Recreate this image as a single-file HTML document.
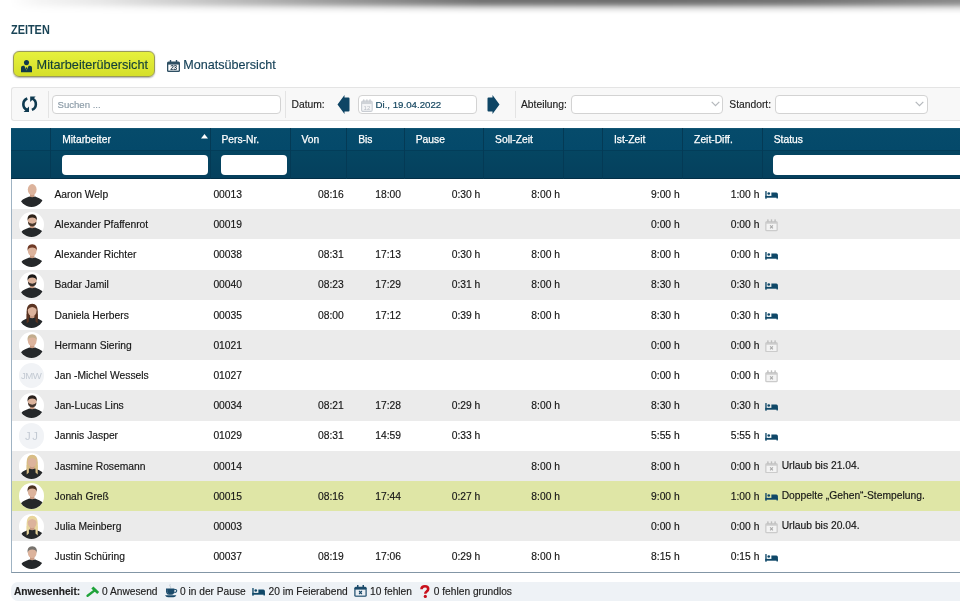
<!DOCTYPE html>
<html><head><meta charset="utf-8">
<style>
*{box-sizing:border-box;margin:0;padding:0}
html,body{width:960px;height:607px;overflow:hidden;background:#fff;font-family:"Liberation Sans",sans-serif;color:#222}
body div{-webkit-text-stroke:.15px}
#wrap{position:absolute;left:0;top:0;width:960px;height:607px;will-change:transform}
.abs{position:absolute}
#shadow{position:absolute;left:0;top:0;width:960px;height:15px;background:linear-gradient(rgba(0,0,0,.575) 0px,rgba(0,0,0,.553) 1.5px,rgba(0,0,0,.522) 2.5px,rgba(0,0,0,.478) 3.5px,rgba(0,0,0,.424) 4.5px,rgba(0,0,0,.353) 5.5px,rgba(0,0,0,.278) 6.5px,rgba(0,0,0,.212) 7.5px,rgba(0,0,0,.153) 8.5px,rgba(0,0,0,.106) 9.5px,rgba(0,0,0,.075) 10.5px,rgba(0,0,0,.047) 11.5px,rgba(0,0,0,.027) 12.5px,rgba(0,0,0,.012) 13.5px,rgba(0,0,0,0) 15px);-webkit-mask-image:linear-gradient(to right,rgba(0,0,0,0) 0px,rgba(0,0,0,0) 10px,rgba(0,0,0,.07) 40px,rgba(0,0,0,.16) 100px,rgba(0,0,0,.48) 240px,rgba(0,0,0,.70) 340px,rgba(0,0,0,.97) 480px,rgba(0,0,0,1) 650px,rgba(0,0,0,.96) 800px,rgba(0,0,0,.84) 920px,rgba(0,0,0,.8) 960px)}
#title{position:absolute;left:11px;top:23.3px;-webkit-text-stroke:0;font-weight:bold;font-size:12.4px;color:#1a4456;transform:scaleX(.88);transform-origin:0 0;letter-spacing:0}
#btn1{position:absolute;left:13.3px;top:51px;width:141.8px;height:26.3px;border:1px solid #9a9a5a;border-radius:6px;background:linear-gradient(#e6f13e,#d5df2a);box-shadow:0 .5px 1.5px rgba(0,0,0,.3)}
#btn1 span{position:absolute;left:22.3px;top:5.5px;font-size:12.7px;color:#123f38;white-space:nowrap}
#btn2{position:absolute;left:167px;top:53px;height:24px}
#btn2 span{position:absolute;left:16.3px;top:4.6px;font-size:12.6px;color:#123e55;white-space:nowrap}
#tb{position:absolute;left:11px;top:87.2px;width:960px;height:34.2px;background:#f8f8f8;border:1px solid #e4e4e4;border-right:none;border-radius:3px 0 0 3px}
.sep{position:absolute;top:91px;width:1px;height:26.5px;background:#e4e4e4}
.inp{position:absolute;background:#fff;border:1px solid #d3d3d3;border-radius:4px}
.lbl{position:absolute;font-size:10.3px;color:#222;white-space:nowrap}
#thead{position:absolute;left:11px;top:128px;width:960px;height:51px;background:linear-gradient(#1f5f7c 0,#064b6b 1px,#04496a 22px,#054662 23px,#05405d 50px)}
.hsep{position:absolute;top:128px;width:1px;height:51px;background:#043a55}
.hline{position:absolute;left:11px;width:960px;height:1px;background:#033d59}
.ht{position:absolute;top:134px;font-size:10.3px;color:#fff;white-space:nowrap;-webkit-text-stroke:.25px #fff}
.fin{position:absolute;top:155px;height:19.5px;background:#fff;border-radius:4px}
.row{position:absolute;left:11px;width:960px;height:30.2px}
.c{position:absolute;font-size:10.3px;color:#151515;white-space:nowrap;line-height:12px}
.r{text-align:right}
.av{position:absolute;width:25.5px;height:25.5px;border-radius:50%;overflow:hidden;background:#fff}
.av svg{position:absolute;left:0;top:0}
.ini{background:#f1f3f6;color:#c3cad3;font-size:9.6px;text-align:center;line-height:25.5px;letter-spacing:-.55px;text-indent:-.5px;-webkit-text-stroke:0}
.jj{font-size:11.3px;letter-spacing:1.5px;text-indent:1.5px;line-height:26px}
.ic{position:absolute}
#tbl{position:absolute;left:11px;top:179px;width:960px;height:393.6px;border-left:1px solid #9fb3c3;border-bottom:1px solid #8396a6}
#foot{position:absolute;left:11px;top:582px;width:960px;height:18.5px;background:#eef2f6;border-radius:7px 0 0 7px}
.ft{position:absolute;top:585.5px;font-size:10.2px;color:#222;white-space:nowrap}
</style></head><body><div id="wrap">
<div id="shadow"></div>
<div id="title">ZEITEN</div>
<div id="btn1"><svg class="abs" style="left:7.1px;top:7.5px" width="11" height="13" viewBox="0 0 11 13"><circle cx="5.5" cy="2.6" r="2.55" fill="#103a4c"/><path d="M0 12.3V7.8Q0 5.7 2 5.7H3.3L5.5 10.4L7.7 5.7H9Q11 5.7 11 7.8V12.3z" fill="#103a4c"/><path d="M5.5 6.9L6.2 7.9 5.5 10.6 4.8 7.9z" fill="#103a4c"/></svg><span>Mitarbeiterübersicht</span></div>
<div id="btn2"><svg class="abs" style="left:0;top:6.5px" width="13" height="12" viewBox="0 0 13 12"><rect x="0" y="1.5" width="13" height="10.5" rx="1.5" fill="#2e4f63"/><rect x="1.3" y="4.6" width="10.4" height="6" fill="#fff"/><rect x="2.8" y="0" width="1.4" height="3" fill="#2e4f63"/><rect x="8.8" y="0" width="1.4" height="3" fill="#2e4f63"/><text x="6.5" y="10.3" font-size="6.6" font-family="Liberation Sans" font-weight="bold" text-anchor="middle" fill="#253f50" letter-spacing="-.3">23</text></svg><span>Monatsübersicht</span></div>
<div id="tb"></div>

<svg class="abs" style="left:21px;top:96px" width="17" height="17" viewBox="21 96 17 17"><path d="M27.3 98.5A6.1 6.1 0 0 0 26.8 109.7" stroke="#0f3a50" stroke-width="2.6" fill="none"/><path d="M23.6 112H29V106.4z" fill="#0f3a50"/><path d="M31.9 109.9A6.1 6.1 0 0 0 32.4 98.7" stroke="#0f3a50" stroke-width="2.6" fill="none"/><path d="M35.6 96.4H30.2V102z" fill="#0f3a50"/></svg>
<div class="sep" style="left:48px"></div>
<div class="inp" style="left:52px;top:95px;width:229px;height:18.5px"></div>
<div class="lbl" style="left:57.5px;top:98.5px;font-size:9.6px;color:#8a9aa6">Suchen ...</div>
<div class="sep" style="left:285px"></div>
<div class="lbl" style="left:291.5px;top:98.5px">Datum:</div>
<svg class="abs" style="left:336.5px;top:95px" width="13" height="19" viewBox="0 0 13 19"><path d="M0.5 9.5L7.5 0V2.5H11.5Q12.5 2.5 12.5 3.5V15.5Q12.5 16.5 11.5 16.5H7.5V19z" fill="#0e4565"/></svg>
<div class="inp" style="left:357.7px;top:95px;width:119.8px;height:18.5px"></div>
<svg class="abs" style="left:361px;top:98.8px" width="12" height="13" viewBox="0 0 12 13"><rect x=".6" y="2.1" width="10.6" height="10.3" rx="1.4" fill="#f3f4f6" stroke="#c9cdd3" stroke-width="1.1"/><rect x="1" y="2.4" width="9.8" height="2.6" fill="#cfd3d8"/><rect x="2.2" y=".2" width="1.2" height="2.6" rx=".5" fill="#c4c8ce"/><rect x="5.3" y=".2" width="1.2" height="2.6" rx=".5" fill="#c4c8ce"/><rect x="8.4" y=".2" width="1.2" height="2.6" rx=".5" fill="#c4c8ce"/><text x="5.9" y="11.2" font-size="6" font-family="Liberation Sans" text-anchor="middle" fill="#b9bec5">12</text></svg>
<div class="lbl" style="left:375.5px;top:99px;font-size:9.7px;color:#164760;-webkit-text-stroke:.2px #164760">Di., 19.04.2022</div>
<svg class="abs" style="left:486.5px;top:95px" width="13" height="19" viewBox="0 0 13 19"><path d="M12.5 9.5L5.5 0V2.5H1.5Q.5 2.5 .5 3.5V15.5Q.5 16.5 1.5 16.5H5.5V19z" fill="#0e4565"/></svg>
<div class="sep" style="left:514.5px"></div>
<div class="lbl" style="left:521px;top:98.5px">Abteilung:</div>
<div class="inp" style="left:570.5px;top:95px;width:152.5px;height:18.5px"></div>
<svg class="abs" style="left:710.6px;top:101px" width="9" height="6" viewBox="0 0 9 6"><path d="M.7 .8L4.5 4.6 8.3 .8" stroke="#b4b8bc" stroke-width="1.2" fill="none"/></svg>
<div class="lbl" style="left:729.3px;top:98.5px">Standort:</div>
<div class="inp" style="left:775px;top:95px;width:152.5px;height:18.5px"></div>
<svg class="abs" style="left:915.1px;top:101px" width="9" height="6" viewBox="0 0 9 6"><path d="M.7 .8L4.5 4.6 8.3 .8" stroke="#b4b8bc" stroke-width="1.2" fill="none"/></svg>
<div id="thead"></div>
<div class="hline" style="top:150.3px"></div>
<div class="hline" style="top:178px;background:#032f47"></div>
<div class="hsep" style="left:50.4px"></div>
<div class="hsep" style="left:209.6px"></div>
<div class="hsep" style="left:289.6px"></div>
<div class="hsep" style="left:346.4px"></div>
<div class="hsep" style="left:403.9px"></div>
<div class="hsep" style="left:483.3px"></div>
<div class="hsep" style="left:563.3px"></div>
<div class="hsep" style="left:602.1px"></div>
<div class="hsep" style="left:682.3px"></div>
<div class="hsep" style="left:761.9px"></div>
<div class="ht" style="left:62.2px">Mitarbeiter</div>
<div class="ht" style="left:221.4px">Pers-Nr.</div>
<div class="ht" style="left:301.4px">Von</div>
<div class="ht" style="left:358.2px">Bis</div>
<div class="ht" style="left:415.7px">Pause</div>
<div class="ht" style="left:495.1px">Soll-Zeit</div>
<div class="ht" style="left:613.9px">Ist-Zeit</div>
<div class="ht" style="left:694.1px">Zeit-Diff.</div>
<div class="ht" style="left:773.7px">Status</div>
<svg class="abs" style="left:201px;top:133.5px" width="7" height="5" viewBox="0 0 7 5"><path d="M0 4.5L3.5 0 7 4.5z" fill="#fff"/></svg>
<div class="fin" style="left:62px;width:145.5px"></div>
<div class="fin" style="left:221px;width:65.7px"></div>
<div class="fin" style="left:773.3px;width:300px"></div>
<div class="row" style="top:179.00px;background:#fff"></div>
<div class="abs" style="left:18.7px;top:181.40px"><div class="av"><svg width="26" height="26" viewBox="0 0 26 26"><rect x="11" y="12" width="4.4" height="5" fill="#c99c84"/><ellipse cx="13.2" cy="8.6" rx="4.4" ry="5.6" fill="#dcb39c"/><path d="M.5 26Q.8 19 6.2 17.2L10.3 15.6Q13.2 16.8 16.1 15.6L20.2 17.2Q25.6 19 25.9 26z" fill="#25282a"/></svg></div></div>
<div class="c" style="left:54.5px;top:188.80px">Aaron Welp</div>
<div class="c" style="left:213.4px;top:188.80px">00013</div>
<div class="c r" style="left:243.8px;width:100px;top:188.80px">08:16</div>
<div class="c r" style="left:301.0px;width:100px;top:188.80px">18:00</div>
<div class="c r" style="left:380.3px;width:100px;top:188.80px">0:30 h</div>
<div class="c r" style="left:460.0px;width:100px;top:188.80px">8:00 h</div>
<div class="c r" style="left:579.7px;width:100px;top:188.80px">9:00 h</div>
<div class="c r" style="left:659.4px;width:100px;top:188.80px">1:00 h</div>
<svg class="ic" style="left:765.3px;top:191.20px" width="13.5" height="8" viewBox="0 0 13.5 8"><rect x=".3" y=".1" width="1.35" height="7.7" rx=".4" fill="#0f4868"/><circle cx="3.75" cy="2.5" r="1.35" fill="#0f4868"/><path d="M6.4 1.6H11.3Q12.9 1.6 12.9 3.2V5.2H6.4z" fill="#0f4868"/><rect x=".3" y="4.9" width="12.6" height="1.8" fill="#0f4868"/><rect x="11.5" y="5" width="1.4" height="2.6" rx=".4" fill="#0f4868"/></svg>
<div class="row" style="top:209.20px;background:#ebebeb"></div>
<div class="abs" style="left:18.7px;top:211.60px"><div class="av"><svg width="26" height="26" viewBox="0 0 26 26"><rect x="11" y="12" width="4.4" height="5" fill="#c99c84"/><ellipse cx="13.2" cy="8.6" rx="4.4" ry="5.6" fill="#dcb39c"/><path d="M8.6 8.8q-.8-6.3 4.6-6.5q5.4 .2 4.6 6.5q-.8-3.2-4.6-3.2q-3.8 0-4.6 3.2z" fill="#2e2219"/><path d="M8.9 9.6q.3 4.9 4.3 4.9q4 0 4.3-4.9q-1.2 2.1-4.3 2.1q-3.1 0-4.3-2.1z" fill="#2e2219" opacity=".85"/><path d="M.5 26Q.8 19 6.2 17.2L10.3 15.6Q13.2 16.8 16.1 15.6L20.2 17.2Q25.6 19 25.9 26z" fill="#25282a"/></svg></div></div>
<div class="c" style="left:54.5px;top:219.00px">Alexander Pfaffenrot</div>
<div class="c" style="left:213.4px;top:219.00px">00019</div>
<div class="c r" style="left:579.7px;width:100px;top:219.00px">0:00 h</div>
<div class="c r" style="left:659.4px;width:100px;top:219.00px">0:00 h</div>
<svg class="ic" style="left:765.4px;top:219.10px" width="13" height="12.5" viewBox="0 0 13 12.5"><rect x=".2" y="2" width="12.6" height="10.3" rx="1.6" fill="#cbcbcb"/><rect x="1.5" y="4.7" width="10" height="6.3" fill="#f3f3f3"/><rect x="2.2" y=".2" width="1.4" height="2.6" rx=".6" fill="#bdbdbd"/><rect x="5.8" y=".2" width="1.4" height="2.6" rx=".6" fill="#bdbdbd"/><rect x="9.4" y=".2" width="1.4" height="2.6" rx=".6" fill="#bdbdbd"/><path d="M5.1 6.3l2.8 3M7.9 6.3L5.1 9.3" stroke="#a9a9a9" stroke-width="1.1"/></svg>
<div class="row" style="top:239.40px;background:#fff"></div>
<div class="abs" style="left:18.7px;top:241.80px"><div class="av"><svg width="26" height="26" viewBox="0 0 26 26"><rect x="11" y="12" width="4.4" height="5" fill="#c99c84"/><ellipse cx="13.2" cy="8.6" rx="4.4" ry="5.6" fill="#dcb39c"/><path d="M8.6 8.8q-.8-6.3 4.6-6.5q5.4 .2 4.6 6.5q-.8-3.2-4.6-3.2q-3.8 0-4.6 3.2z" fill="#6e3a26"/><path d="M.5 26Q.8 19 6.2 17.2L10.3 15.6Q13.2 16.8 16.1 15.6L20.2 17.2Q25.6 19 25.9 26z" fill="#25282a"/></svg></div></div>
<div class="c" style="left:54.5px;top:249.20px">Alexander Richter</div>
<div class="c" style="left:213.4px;top:249.20px">00038</div>
<div class="c r" style="left:243.8px;width:100px;top:249.20px">08:31</div>
<div class="c r" style="left:301.0px;width:100px;top:249.20px">17:13</div>
<div class="c r" style="left:380.3px;width:100px;top:249.20px">0:30 h</div>
<div class="c r" style="left:460.0px;width:100px;top:249.20px">8:00 h</div>
<div class="c r" style="left:579.7px;width:100px;top:249.20px">8:00 h</div>
<div class="c r" style="left:659.4px;width:100px;top:249.20px">0:00 h</div>
<svg class="ic" style="left:765.3px;top:251.60px" width="13.5" height="8" viewBox="0 0 13.5 8"><rect x=".3" y=".1" width="1.35" height="7.7" rx=".4" fill="#0f4868"/><circle cx="3.75" cy="2.5" r="1.35" fill="#0f4868"/><path d="M6.4 1.6H11.3Q12.9 1.6 12.9 3.2V5.2H6.4z" fill="#0f4868"/><rect x=".3" y="4.9" width="12.6" height="1.8" fill="#0f4868"/><rect x="11.5" y="5" width="1.4" height="2.6" rx=".4" fill="#0f4868"/></svg>
<div class="row" style="top:269.60px;background:#ebebeb"></div>
<div class="abs" style="left:18.7px;top:272.00px"><div class="av"><svg width="26" height="26" viewBox="0 0 26 26"><rect x="11" y="12" width="4.4" height="5" fill="#c99c84"/><ellipse cx="13.2" cy="8.6" rx="4.4" ry="5.6" fill="#dcb39c"/><path d="M8.6 8.8q-.8-6.3 4.6-6.5q5.4 .2 4.6 6.5q-.8-3.2-4.6-3.2q-3.8 0-4.6 3.2z" fill="#1a1816"/><path d="M8.9 9.6q.3 4.9 4.3 4.9q4 0 4.3-4.9q-1.2 2.1-4.3 2.1q-3.1 0-4.3-2.1z" fill="#1a1816" opacity=".85"/><path d="M.5 26Q.8 19 6.2 17.2L10.3 15.6Q13.2 16.8 16.1 15.6L20.2 17.2Q25.6 19 25.9 26z" fill="#25282a"/></svg></div></div>
<div class="c" style="left:54.5px;top:279.40px">Badar Jamil</div>
<div class="c" style="left:213.4px;top:279.40px">00040</div>
<div class="c r" style="left:243.8px;width:100px;top:279.40px">08:23</div>
<div class="c r" style="left:301.0px;width:100px;top:279.40px">17:29</div>
<div class="c r" style="left:380.3px;width:100px;top:279.40px">0:31 h</div>
<div class="c r" style="left:460.0px;width:100px;top:279.40px">8:00 h</div>
<div class="c r" style="left:579.7px;width:100px;top:279.40px">8:30 h</div>
<div class="c r" style="left:659.4px;width:100px;top:279.40px">0:30 h</div>
<svg class="ic" style="left:765.3px;top:281.80px" width="13.5" height="8" viewBox="0 0 13.5 8"><rect x=".3" y=".1" width="1.35" height="7.7" rx=".4" fill="#0f4868"/><circle cx="3.75" cy="2.5" r="1.35" fill="#0f4868"/><path d="M6.4 1.6H11.3Q12.9 1.6 12.9 3.2V5.2H6.4z" fill="#0f4868"/><rect x=".3" y="4.9" width="12.6" height="1.8" fill="#0f4868"/><rect x="11.5" y="5" width="1.4" height="2.6" rx=".4" fill="#0f4868"/></svg>
<div class="row" style="top:299.80px;background:#fff"></div>
<div class="abs" style="left:18.7px;top:302.20px"><div class="av"><svg width="26" height="26" viewBox="0 0 26 26"><path d="M7.6 9.5q0-7.5 5.6-7.7q5.6 .2 5.6 7.7v11h-11.2z" fill="#5a3422"/><rect x="11" y="12" width="4.4" height="5" fill="#c99c84"/><ellipse cx="13.2" cy="8.6" rx="4.4" ry="5.6" fill="#dcb39c"/><path d="M8.6 7.6q.6-5.1 4.6-5.3q4 .2 4.6 5.3q-2-2.6-4.6-2.6q-2.6 0-4.6 2.6z" fill="#5a3422"/><path d="M.5 26Q.8 19 6.2 17.2L10.3 15.6Q13.2 16.8 16.1 15.6L20.2 17.2Q25.6 19 25.9 26z" fill="#25282a"/><path d="M7.7 12v9.5l2.2-2V14zM18.7 12v9.5l-2.2-2V14z" fill="#5a3422"/></svg></div></div>
<div class="c" style="left:54.5px;top:309.60px">Daniela Herbers</div>
<div class="c" style="left:213.4px;top:309.60px">00035</div>
<div class="c r" style="left:243.8px;width:100px;top:309.60px">08:00</div>
<div class="c r" style="left:301.0px;width:100px;top:309.60px">17:12</div>
<div class="c r" style="left:380.3px;width:100px;top:309.60px">0:39 h</div>
<div class="c r" style="left:460.0px;width:100px;top:309.60px">8:00 h</div>
<div class="c r" style="left:579.7px;width:100px;top:309.60px">8:30 h</div>
<div class="c r" style="left:659.4px;width:100px;top:309.60px">0:30 h</div>
<svg class="ic" style="left:765.3px;top:312.00px" width="13.5" height="8" viewBox="0 0 13.5 8"><rect x=".3" y=".1" width="1.35" height="7.7" rx=".4" fill="#0f4868"/><circle cx="3.75" cy="2.5" r="1.35" fill="#0f4868"/><path d="M6.4 1.6H11.3Q12.9 1.6 12.9 3.2V5.2H6.4z" fill="#0f4868"/><rect x=".3" y="4.9" width="12.6" height="1.8" fill="#0f4868"/><rect x="11.5" y="5" width="1.4" height="2.6" rx=".4" fill="#0f4868"/></svg>
<div class="row" style="top:330.00px;background:#ebebeb"></div>
<div class="abs" style="left:18.7px;top:332.40px"><div class="av"><svg width="26" height="26" viewBox="0 0 26 26"><rect x="11" y="12" width="4.4" height="5" fill="#c99c84"/><ellipse cx="13.2" cy="8.6" rx="4.4" ry="5.6" fill="#dcb39c"/><path d="M8.6 8.8q-.8-6.3 4.6-6.5q5.4 .2 4.6 6.5q-.8-3.2-4.6-3.2q-3.8 0-4.6 3.2z" fill="#c2ad8e"/><path d="M.5 26Q.8 19 6.2 17.2L10.3 15.6Q13.2 16.8 16.1 15.6L20.2 17.2Q25.6 19 25.9 26z" fill="#25282a"/></svg></div></div>
<div class="c" style="left:54.5px;top:339.80px">Hermann Siering</div>
<div class="c" style="left:213.4px;top:339.80px">01021</div>
<div class="c r" style="left:579.7px;width:100px;top:339.80px">0:00 h</div>
<div class="c r" style="left:659.4px;width:100px;top:339.80px">0:00 h</div>
<svg class="ic" style="left:765.4px;top:339.90px" width="13" height="12.5" viewBox="0 0 13 12.5"><rect x=".2" y="2" width="12.6" height="10.3" rx="1.6" fill="#cbcbcb"/><rect x="1.5" y="4.7" width="10" height="6.3" fill="#f3f3f3"/><rect x="2.2" y=".2" width="1.4" height="2.6" rx=".6" fill="#bdbdbd"/><rect x="5.8" y=".2" width="1.4" height="2.6" rx=".6" fill="#bdbdbd"/><rect x="9.4" y=".2" width="1.4" height="2.6" rx=".6" fill="#bdbdbd"/><path d="M5.1 6.3l2.8 3M7.9 6.3L5.1 9.3" stroke="#a9a9a9" stroke-width="1.1"/></svg>
<div class="row" style="top:360.20px;background:#fff"></div>
<div class="abs" style="left:18.7px;top:362.60px"><div class="av ini">JMW</div></div>
<div class="c" style="left:54.5px;top:370.00px">Jan -Michel Wessels</div>
<div class="c" style="left:213.4px;top:370.00px">01027</div>
<div class="c r" style="left:579.7px;width:100px;top:370.00px">0:00 h</div>
<div class="c r" style="left:659.4px;width:100px;top:370.00px">0:00 h</div>
<svg class="ic" style="left:765.4px;top:370.10px" width="13" height="12.5" viewBox="0 0 13 12.5"><rect x=".2" y="2" width="12.6" height="10.3" rx="1.6" fill="#cbcbcb"/><rect x="1.5" y="4.7" width="10" height="6.3" fill="#f3f3f3"/><rect x="2.2" y=".2" width="1.4" height="2.6" rx=".6" fill="#bdbdbd"/><rect x="5.8" y=".2" width="1.4" height="2.6" rx=".6" fill="#bdbdbd"/><rect x="9.4" y=".2" width="1.4" height="2.6" rx=".6" fill="#bdbdbd"/><path d="M5.1 6.3l2.8 3M7.9 6.3L5.1 9.3" stroke="#a9a9a9" stroke-width="1.1"/></svg>
<div class="row" style="top:390.40px;background:#ebebeb"></div>
<div class="abs" style="left:18.7px;top:392.80px"><div class="av"><svg width="26" height="26" viewBox="0 0 26 26"><rect x="11" y="12" width="4.4" height="5" fill="#c99c84"/><ellipse cx="13.2" cy="8.6" rx="4.4" ry="5.6" fill="#dcb39c"/><path d="M8.6 8.8q-.8-6.3 4.6-6.5q5.4 .2 4.6 6.5q-.8-3.2-4.6-3.2q-3.8 0-4.6 3.2z" fill="#2a211c"/><path d="M8.9 9.6q.3 4.9 4.3 4.9q4 0 4.3-4.9q-1.2 2.1-4.3 2.1q-3.1 0-4.3-2.1z" fill="#2a211c" opacity=".85"/><path d="M.5 26Q.8 19 6.2 17.2L10.3 15.6Q13.2 16.8 16.1 15.6L20.2 17.2Q25.6 19 25.9 26z" fill="#25282a"/></svg></div></div>
<div class="c" style="left:54.5px;top:400.20px">Jan-Lucas Lins</div>
<div class="c" style="left:213.4px;top:400.20px">00034</div>
<div class="c r" style="left:243.8px;width:100px;top:400.20px">08:21</div>
<div class="c r" style="left:301.0px;width:100px;top:400.20px">17:28</div>
<div class="c r" style="left:380.3px;width:100px;top:400.20px">0:29 h</div>
<div class="c r" style="left:460.0px;width:100px;top:400.20px">8:00 h</div>
<div class="c r" style="left:579.7px;width:100px;top:400.20px">8:30 h</div>
<div class="c r" style="left:659.4px;width:100px;top:400.20px">0:30 h</div>
<svg class="ic" style="left:765.3px;top:402.60px" width="13.5" height="8" viewBox="0 0 13.5 8"><rect x=".3" y=".1" width="1.35" height="7.7" rx=".4" fill="#0f4868"/><circle cx="3.75" cy="2.5" r="1.35" fill="#0f4868"/><path d="M6.4 1.6H11.3Q12.9 1.6 12.9 3.2V5.2H6.4z" fill="#0f4868"/><rect x=".3" y="4.9" width="12.6" height="1.8" fill="#0f4868"/><rect x="11.5" y="5" width="1.4" height="2.6" rx=".4" fill="#0f4868"/></svg>
<div class="row" style="top:420.60px;background:#fff"></div>
<div class="abs" style="left:18.7px;top:423.00px"><div class="av ini jj">JJ</div></div>
<div class="c" style="left:54.5px;top:430.40px">Jannis Jasper</div>
<div class="c" style="left:213.4px;top:430.40px">01029</div>
<div class="c r" style="left:243.8px;width:100px;top:430.40px">08:31</div>
<div class="c r" style="left:301.0px;width:100px;top:430.40px">14:59</div>
<div class="c r" style="left:380.3px;width:100px;top:430.40px">0:33 h</div>
<div class="c r" style="left:579.7px;width:100px;top:430.40px">5:55 h</div>
<div class="c r" style="left:659.4px;width:100px;top:430.40px">5:55 h</div>
<svg class="ic" style="left:765.3px;top:432.80px" width="13.5" height="8" viewBox="0 0 13.5 8"><rect x=".3" y=".1" width="1.35" height="7.7" rx=".4" fill="#0f4868"/><circle cx="3.75" cy="2.5" r="1.35" fill="#0f4868"/><path d="M6.4 1.6H11.3Q12.9 1.6 12.9 3.2V5.2H6.4z" fill="#0f4868"/><rect x=".3" y="4.9" width="12.6" height="1.8" fill="#0f4868"/><rect x="11.5" y="5" width="1.4" height="2.6" rx=".4" fill="#0f4868"/></svg>
<div class="row" style="top:450.80px;background:#ebebeb"></div>
<div class="abs" style="left:18.7px;top:453.20px"><div class="av"><svg width="26" height="26" viewBox="0 0 26 26"><path d="M7.6 9.5q0-7.5 5.6-7.7q5.6 .2 5.6 7.7v11h-11.2z" fill="#d8bd85"/><rect x="11" y="12" width="4.4" height="5" fill="#c99c84"/><ellipse cx="13.2" cy="8.6" rx="4.4" ry="5.6" fill="#dcb39c"/><path d="M8.6 7.6q.6-5.1 4.6-5.3q4 .2 4.6 5.3q-2-2.6-4.6-2.6q-2.6 0-4.6 2.6z" fill="#d8bd85"/><path d="M.5 26Q.8 19 6.2 17.2L10.3 15.6Q13.2 16.8 16.1 15.6L20.2 17.2Q25.6 19 25.9 26z" fill="#25282a"/><path d="M7.7 12v9.5l2.2-2V14zM18.7 12v9.5l-2.2-2V14z" fill="#d8bd85"/></svg></div></div>
<div class="c" style="left:54.5px;top:460.60px">Jasmine Rosemann</div>
<div class="c" style="left:213.4px;top:460.60px">00014</div>
<div class="c r" style="left:460.0px;width:100px;top:460.60px">8:00 h</div>
<div class="c r" style="left:579.7px;width:100px;top:460.60px">8:00 h</div>
<div class="c r" style="left:659.4px;width:100px;top:460.60px">0:00 h</div>
<svg class="ic" style="left:765.4px;top:460.70px" width="13" height="12.5" viewBox="0 0 13 12.5"><rect x=".2" y="2" width="12.6" height="10.3" rx="1.6" fill="#cbcbcb"/><rect x="1.5" y="4.7" width="10" height="6.3" fill="#f3f3f3"/><rect x="2.2" y=".2" width="1.4" height="2.6" rx=".6" fill="#bdbdbd"/><rect x="5.8" y=".2" width="1.4" height="2.6" rx=".6" fill="#bdbdbd"/><rect x="9.4" y=".2" width="1.4" height="2.6" rx=".6" fill="#bdbdbd"/><path d="M5.1 6.3l2.8 3M7.9 6.3L5.1 9.3" stroke="#a9a9a9" stroke-width="1.1"/></svg>
<div class="c" style="left:781.7px;top:459.80px">Urlaub bis 21.04.</div>
<div class="row" style="top:481.00px;background:#dfe6a6"></div>
<div class="abs" style="left:18.7px;top:483.40px"><div class="av"><svg width="26" height="26" viewBox="0 0 26 26"><rect x="11" y="12" width="4.4" height="5" fill="#c99c84"/><ellipse cx="13.2" cy="8.6" rx="4.4" ry="5.6" fill="#dcb39c"/><path d="M8.6 8.8q-.8-6.3 4.6-6.5q5.4 .2 4.6 6.5q-.8-3.2-4.6-3.2q-3.8 0-4.6 3.2z" fill="#4a3222"/><path d="M.5 26Q.8 19 6.2 17.2L10.3 15.6Q13.2 16.8 16.1 15.6L20.2 17.2Q25.6 19 25.9 26z" fill="#25282a"/></svg></div></div>
<div class="c" style="left:54.5px;top:490.80px">Jonah Greß</div>
<div class="c" style="left:213.4px;top:490.80px">00015</div>
<div class="c r" style="left:243.8px;width:100px;top:490.80px">08:16</div>
<div class="c r" style="left:301.0px;width:100px;top:490.80px">17:44</div>
<div class="c r" style="left:380.3px;width:100px;top:490.80px">0:27 h</div>
<div class="c r" style="left:460.0px;width:100px;top:490.80px">8:00 h</div>
<div class="c r" style="left:579.7px;width:100px;top:490.80px">9:00 h</div>
<div class="c r" style="left:659.4px;width:100px;top:490.80px">1:00 h</div>
<svg class="ic" style="left:765.3px;top:493.20px" width="13.5" height="8" viewBox="0 0 13.5 8"><rect x=".3" y=".1" width="1.35" height="7.7" rx=".4" fill="#0f4868"/><circle cx="3.75" cy="2.5" r="1.35" fill="#0f4868"/><path d="M6.4 1.6H11.3Q12.9 1.6 12.9 3.2V5.2H6.4z" fill="#0f4868"/><rect x=".3" y="4.9" width="12.6" height="1.8" fill="#0f4868"/><rect x="11.5" y="5" width="1.4" height="2.6" rx=".4" fill="#0f4868"/></svg>
<div class="c" style="left:781.7px;top:490.00px">Doppelte „Gehen“-Stempelung.</div>
<div class="row" style="top:511.20px;background:#ebebeb"></div>
<div class="abs" style="left:18.7px;top:513.60px"><div class="av"><svg width="26" height="26" viewBox="0 0 26 26"><path d="M7.6 9.5q0-7.5 5.6-7.7q5.6 .2 5.6 7.7v11h-11.2z" fill="#e8d59c"/><rect x="11" y="12" width="4.4" height="5" fill="#c99c84"/><ellipse cx="13.2" cy="8.6" rx="4.4" ry="5.6" fill="#dcb39c"/><path d="M8.6 7.6q.6-5.1 4.6-5.3q4 .2 4.6 5.3q-2-2.6-4.6-2.6q-2.6 0-4.6 2.6z" fill="#e8d59c"/><path d="M.5 26Q.8 19 6.2 17.2L10.3 15.6Q13.2 16.8 16.1 15.6L20.2 17.2Q25.6 19 25.9 26z" fill="#25282a"/><path d="M7.7 12v9.5l2.2-2V14zM18.7 12v9.5l-2.2-2V14z" fill="#e8d59c"/></svg></div></div>
<div class="c" style="left:54.5px;top:521.00px">Julia Meinberg</div>
<div class="c" style="left:213.4px;top:521.00px">00003</div>
<div class="c r" style="left:579.7px;width:100px;top:521.00px">0:00 h</div>
<div class="c r" style="left:659.4px;width:100px;top:521.00px">0:00 h</div>
<svg class="ic" style="left:765.4px;top:521.10px" width="13" height="12.5" viewBox="0 0 13 12.5"><rect x=".2" y="2" width="12.6" height="10.3" rx="1.6" fill="#cbcbcb"/><rect x="1.5" y="4.7" width="10" height="6.3" fill="#f3f3f3"/><rect x="2.2" y=".2" width="1.4" height="2.6" rx=".6" fill="#bdbdbd"/><rect x="5.8" y=".2" width="1.4" height="2.6" rx=".6" fill="#bdbdbd"/><rect x="9.4" y=".2" width="1.4" height="2.6" rx=".6" fill="#bdbdbd"/><path d="M5.1 6.3l2.8 3M7.9 6.3L5.1 9.3" stroke="#a9a9a9" stroke-width="1.1"/></svg>
<div class="c" style="left:781.7px;top:520.20px">Urlaub bis 20.04.</div>
<div class="row" style="top:541.40px;background:#fff"></div>
<div class="abs" style="left:18.7px;top:543.80px"><div class="av"><svg width="26" height="26" viewBox="0 0 26 26"><rect x="11" y="12" width="4.4" height="5" fill="#c99c84"/><ellipse cx="13.2" cy="8.6" rx="4.4" ry="5.6" fill="#dcb39c"/><path d="M8.6 8.8q-.8-6.3 4.6-6.5q5.4 .2 4.6 6.5q-.8-3.2-4.6-3.2q-3.8 0-4.6 3.2z" fill="#77736e"/><path d="M.5 26Q.8 19 6.2 17.2L10.3 15.6Q13.2 16.8 16.1 15.6L20.2 17.2Q25.6 19 25.9 26z" fill="#25282a"/></svg></div></div>
<div class="c" style="left:54.5px;top:551.20px">Justin Schüring</div>
<div class="c" style="left:213.4px;top:551.20px">00037</div>
<div class="c r" style="left:243.8px;width:100px;top:551.20px">08:19</div>
<div class="c r" style="left:301.0px;width:100px;top:551.20px">17:06</div>
<div class="c r" style="left:380.3px;width:100px;top:551.20px">0:29 h</div>
<div class="c r" style="left:460.0px;width:100px;top:551.20px">8:00 h</div>
<div class="c r" style="left:579.7px;width:100px;top:551.20px">8:15 h</div>
<div class="c r" style="left:659.4px;width:100px;top:551.20px">0:15 h</div>
<svg class="ic" style="left:765.3px;top:553.60px" width="13.5" height="8" viewBox="0 0 13.5 8"><rect x=".3" y=".1" width="1.35" height="7.7" rx=".4" fill="#0f4868"/><circle cx="3.75" cy="2.5" r="1.35" fill="#0f4868"/><path d="M6.4 1.6H11.3Q12.9 1.6 12.9 3.2V5.2H6.4z" fill="#0f4868"/><rect x=".3" y="4.9" width="12.6" height="1.8" fill="#0f4868"/><rect x="11.5" y="5" width="1.4" height="2.6" rx=".4" fill="#0f4868"/></svg>
<div id="tbl"></div>
<div id="foot"></div>
<div class="ft" style="left:14px;font-weight:bold">Anwesenheit:</div>
<svg class="abs" style="left:86px;top:585.5px" width="14" height="12" viewBox="0 0 14 12"><path d="M1.6 9.7L9 4.1" stroke="#1fa33a" stroke-width="2.4" stroke-linecap="round"/><path d="M7.4 .4L13.2 5.9 11.2 8 5.3 2.4z" fill="#1fa33a"/></svg>
<svg class="abs" style="left:164.5px;top:584px" width="13" height="14" viewBox="0 0 13 14"><path d="M5.2 .3q-.9 1 0 2t0 2.2" stroke="#b5c0c9" stroke-width=".8" fill="none"/><path d="M1 4.6h8.4v2.6q0 3-3 3.6H4q-3-.6-3-3.6z" fill="#1a4a6a"/><path d="M2.2 5.6v1.8q0 1.6 1.4 2.3" stroke="#5b7f98" stroke-width=".6" fill="none"/><path d="M9.2 5.5h1q1.6 0 1.5 1.5t-2.4 1.6" stroke="#1a4a6a" stroke-width="1.1" fill="none"/><path d="M0 11.3h11.4q-1 1.9-3 1.9H3q-2 0-3-1.9z" fill="#1a4a6a"/></svg>
<div class="ft" style="left:102px">0 Anwesend</div>
<div class="ft" style="left:180px">0 in der Pause</div>
<div class="ft" style="left:268.5px">20 im Feierabend</div>
<svg class="ic" style="left:252px;top:587.8px" width="13.5" height="8" viewBox="0 0 13.5 8"><rect x=".3" y=".1" width="1.35" height="7.7" rx=".4" fill="#0f4868"/><circle cx="3.75" cy="2.5" r="1.35" fill="#0f4868"/><path d="M6.4 1.6H11.3Q12.9 1.6 12.9 3.2V5.2H6.4z" fill="#0f4868"/><rect x=".3" y="4.9" width="12.6" height="1.8" fill="#0f4868"/><rect x="11.5" y="5" width="1.4" height="2.6" rx=".4" fill="#0f4868"/></svg>
<svg class="abs" style="left:353.8px;top:585.2px" width="13" height="12" viewBox="0 0 13 12"><rect x=".3" y="1.8" width="12.4" height="10" rx="1.5" fill="#1a4a6a"/><rect x="1.5" y="4.6" width="10" height="6" fill="#e9eef3"/><rect x="3" y="0" width="1.5" height="3" fill="#1a4a6a"/><rect x="8.5" y="0" width="1.5" height="3" fill="#1a4a6a"/><path d="M5.1 6l2.8 3M7.9 6L5.1 9" stroke="#1a4a6a" stroke-width="1.1"/></svg>
<div class="ft" style="left:370px">10 fehlen</div>
<svg class="abs" style="left:419.5px;top:584.5px" width="10" height="13" viewBox="0 0 10 13"><path d="M1.5 4.3Q1.5 1.3 4.9 1.3Q8.2 1.3 8.2 4Q8.2 5.6 6.6 6.5Q5.3 7.3 5.3 8.8" stroke="#c8101c" stroke-width="2.6" fill="none"/><circle cx="5.3" cy="11.4" r="1.6" fill="#c8101c"/></svg>
<div class="ft" style="left:433.8px">0 fehlen grundlos</div>
</div></body></html>
